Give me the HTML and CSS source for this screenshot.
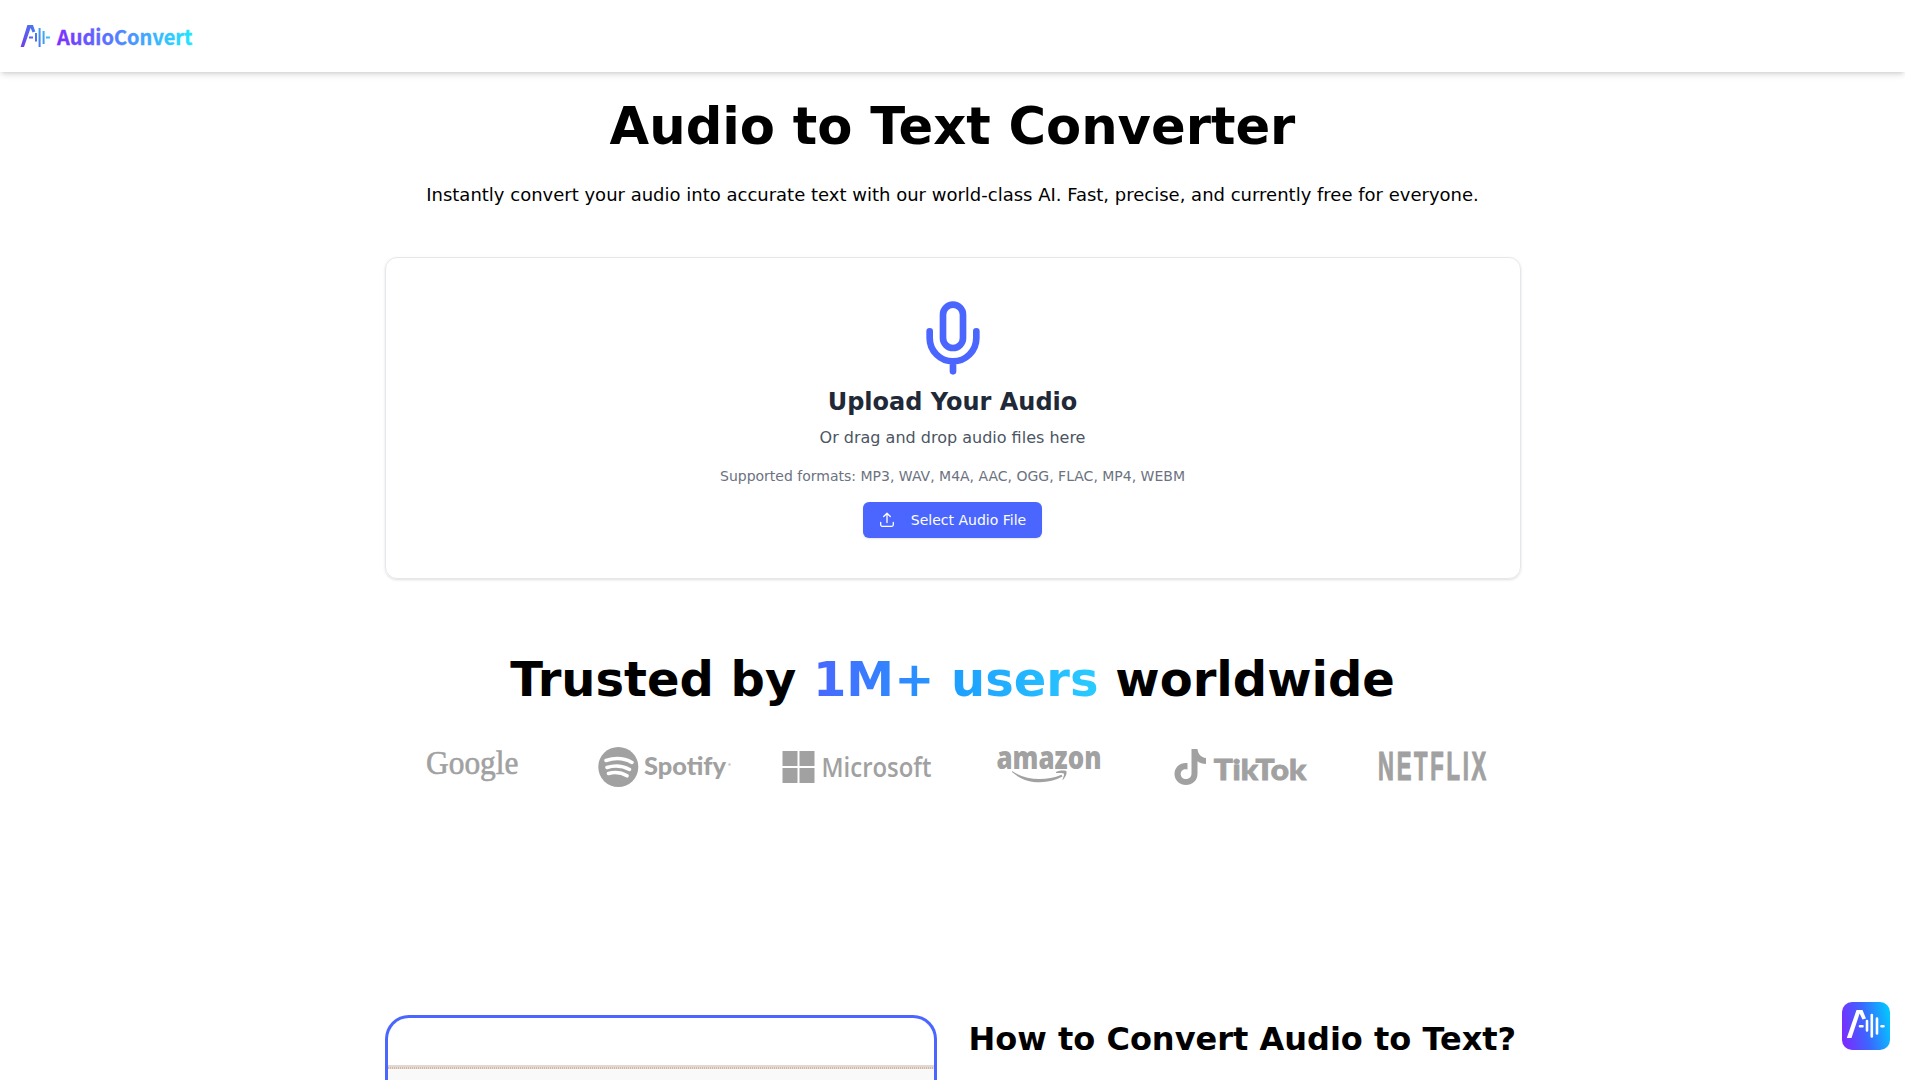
FILE: index.html
```html
<!DOCTYPE html>
<html lang="en">
<head>
<meta charset="utf-8">
<title>Audio to Text Converter</title>
<link rel="stylesheet" href="styles.css">
</head>
<body>
<header class="header">
  <svg class="brand" width="180" height="34" viewBox="0 0 180 34">
    <defs>
      <linearGradient id="brand-text" gradientUnits="userSpaceOnUse" x1="37" y1="0" x2="173" y2="0"><stop offset="0" stop-color="#7b2fff"/><stop offset=".5" stop-color="#4e8cff"/><stop offset="1" stop-color="#1fe8ff"/></linearGradient>
      <linearGradient id="brand-mark" gradientUnits="userSpaceOnUse" x1="0" y1="22" x2="30" y2="12"><stop offset="0" stop-color="#7040e8"/><stop offset=".5" stop-color="#4a72f5"/><stop offset="1" stop-color="#2fd8f5"/></linearGradient>
    </defs>
    <path d="M.6 28 7.400 6H13L15.300 12.500 12.600 13.500 10.600 9 4 28Z" fill="url(#brand-mark)"/>
    <g fill="none" stroke="url(#brand-mark)">
      <path d="M9 18.500H13M26 18.510H30" stroke-width="1.800"/>
      <path d="M16 14 16.010 22.500M19.600 9 19.610 28M23.600 12 23.610 25" stroke-width="2"/>
    </g>
    <text class="brand-name" x="37" y="25.700" textLength="135.500" lengthAdjust="spacingAndGlyphs" fill="url(#brand-text)">AudioConvert</text>
  </svg>
</header>
<main class="main">
  <h1 class="title">Audio to Text Converter</h1>
  <p class="subtitle">Instantly convert your audio into accurate text with our world-class AI. Fast, precise, and currently free for everyone.</p>
  <section class="upload">
    <svg class="mic" width="80" height="80" viewBox="0 0 24 24" fill="none" stroke="currentColor" stroke-width="2" stroke-linecap="round" stroke-linejoin="round"><path d="M12 19v3M19 10v2a7 7 0 0 1-14 0v-2"/><rect x="9" y="2" width="6" height="13" rx="3"/></svg>
    <h2 class="upload-title">Upload Your Audio</h2>
    <p class="upload-hint">Or drag and drop audio files here</p>
    <p class="upload-formats">Supported formats: MP3, WAV, M4A, AAC, OGG, FLAC, MP4, WEBM</p>
    <button class="button" type="button">
      <svg width="16" height="16" viewBox="0 0 16 16" fill="none" stroke="currentColor" stroke-width="1.300" stroke-linecap="round" stroke-linejoin="round"><path d="M1.700 10.500V12.800A1.500 1.500 0 0 0 3.200 14.300H12.800A1.500 1.500 0 0 0 14.300 12.800V10.500M8 10.500V1.500M4.700 4.500 8 1.300 11.300 4.500"/></svg>
      <span>Select Audio File</span>
    </button>
  </section>
  <section class="trusted">
    <h2 class="trusted-title">Trusted by <span class="accent">1M+ users</span> worldwide</h2>
    <div class="logos">
      <svg viewBox="0 0 176 40"><text class="google" x="41" y="26.800" textLength="92.500" lengthAdjust="spacingAndGlyphs">Google</text></svg>
      <svg viewBox="0 0 176 40"><circle cx="41.300" cy="20" r="20"/><path d="M29 13.500C38 10.500 48 11.500 55 15.500M30 20.500C38 18 46 19 52.500 22.500M31.500 26.500C38 24.800 44.500 25.600 50 28.800" class="cut"/><text class="spotify" x="67" y="28.300" textLength="82" lengthAdjust="spacingAndGlyphs">Spotify</text><circle cx="152.500" cy="17.500" r="1.200" opacity=".6"/></svg>
      <svg viewBox="0 0 176 40"><path d="M13.500 4H28.500V19H13.500ZM30.500 4H45.500V19H30.500ZM13.500 21H28.500V36H13.500ZM30.500 21H45.500V36H30.500Z"/><text class="microsoft" x="52.500" y="29.500" textLength="110" lengthAdjust="spacingAndGlyphs">Microsoft</text></svg>
      <svg viewBox="0 0 176 40"><text class="amazon" x="35.500" y="21.800" textLength="105" lengthAdjust="spacingAndGlyphs">amazon</text><path d="M51 24C65 33.500 84 34.500 100.500 27.800L101.500 29.600C86 38 65 37.500 51 25ZM95 25C99 23.400 105 23 105.500 24.600C106 27 104 31 101.500 33.200C101 33 103.500 28.500 103 26.700C101 25.800 98 26 95 26Z"/></svg>
      <svg viewBox="0 0 176 40"><path d="M38.500 2H44.500C45 7 48 10.500 53 11V17C49.700 17 47 16 44.500 14.300V26.500C44.500 34 39 38 33 38C27 38 21.500 33.500 21.500 27C21.500 20 27.500 15.300 34.500 16.200V22.500C31 21.500 27.700 23.500 27.700 27C27.700 30 30 32 33 32C36.500 32 38.500 29.500 38.500 26.500Z"/><text class="tiktok" x="60.700" y="33" textLength="92.500" lengthAdjust="spacingAndGlyphs">TikTok</text></svg>
      <svg viewBox="0 0 176 40"><text class="netflix" x="33" y="33" textLength="111" lengthAdjust="spacingAndGlyphs">NETFLIX</text></svg>
    </div>
  </section>
  <section class="howto">
    <div class="preview"><div class="preview-image"></div></div>
    <h2 class="howto-title">How to Convert Audio to Text?</h2>
  </section>
</main>
<div class="badge">
  <svg width="48" height="48" viewBox="0 0 48 48">
    <defs><linearGradient id="badge-bg" x1="0" y1=".6" x2="1" y2=".4"><stop offset="0" stop-color="#7a2cff"/><stop offset=".5" stop-color="#3a68ff"/><stop offset="1" stop-color="#05c3ff"/></linearGradient></defs>
    <rect width="48" height="48" rx="10" fill="url(#badge-bg)"/>
    <path d="M4.800 36 14.500 8H20.500L24 16.500 20.500 17.500 17.600 11.500 9.500 36Z" fill="#fff"/>
    <path d="M18 24.300H20.500M39.500 24.300H41.500M25 19V28.500M29.800 13V34.500M35 16.500V31.500" fill="none" stroke="#fff" stroke-width="2.600" stroke-linecap="round"/>
  </svg>
</div>
</body>
</html>
```
FILE: styles.css
```css
* { box-sizing: border-box; }
html { overflow: hidden; }
body { margin: 0; width: 1905px; height: 1080px; overflow: hidden; background: #fff; color: #000; font-family: "DejaVu Sans", sans-serif; }
h1, h2, p { margin: 0; }
.header { height: 72px; padding: 19px 20px; box-shadow: 0 4px 6px -1px rgba(0, 0, 0, .12), 0 2px 4px -2px rgba(0, 0, 0, .12); }
.brand { display: block; }
.brand-name { font: 700 20.5px "Noto Sans CJK SC", sans-serif; stroke: url(#brand-text); stroke-width: .3px; }
.main { width: 1136px; margin: 0 auto; display: flex; flex-direction: column; text-align: center; }
.title { margin-top: 24px; font-size: 51.2px; line-height: 60px; white-space: nowrap; }
.subtitle { margin-top: 25px; font-size: 18px; line-height: 28px; white-space: nowrap; }
.upload { margin-top: 48px; height: 322px; padding-top: 40px; display: flex; flex-direction: column; align-items: center; border: 1px solid #e5e7eb; border-radius: 12px; box-shadow: 0 1px 3px rgba(0, 0, 0, .1), 0 1px 2px -1px rgba(0, 0, 0, .1); }
.mic { color: #4a66ff; }
.upload-title { margin-top: 8px; font-size: 24px; line-height: 32px; color: #1f2937; }
.upload-hint { margin-top: 8px; font-size: 16px; line-height: 24px; color: #4b5563; }
.upload-formats { margin-top: 16px; font-size: 14px; line-height: 20px; color: #6b7280; }
.button { margin-top: 16px; height: 36px; padding: 0 16px; display: flex; align-items: center; gap: 16px; border: 0; border-radius: 6px; background: #4a66ff; color: #fff; font: 14px "DejaVu Sans", sans-serif; box-shadow: 0 1px 2px rgba(0, 0, 0, .1); }
.trusted { margin-top: 68px; }
.trusted-title { font-size: 48px; line-height: 64px; white-space: nowrap; }
.accent { background: linear-gradient(90deg, #4a66ff, #1e9fff 50%, #2accff); background-clip: text; color: transparent; }
.logos { margin-top: 36px; display: grid; grid-template-columns: repeat(6, 1fr); gap: 16px; }
.logos svg { width: 176px; height: 40px; fill: #a1a1a1; display: block; overflow: visible; }
.logos .cut { fill: none; stroke: #fff; stroke-width: 3.5; stroke-linecap: round; }
.logos text { stroke: #a1a1a1; stroke-width: 0; }
.logos .google { font: 34.5px "Liberation Serif", serif; stroke-width: .6px; }
.logos .spotify { font: 900 25px Lato, sans-serif; }
.logos .microsoft { font: 600 26.5px "Open Sans", sans-serif; }
.logos .amazon { font: 800 31px "Open Sans", sans-serif; }
.logos .tiktok { font: 900 29px Lato, sans-serif; stroke-width: .9px; }
.logos .netflix { font: 700 40px "Liberation Sans", sans-serif; letter-spacing: 5px; stroke-width: 1.2px; }
.howto { margin-top: 228px; display: grid; grid-template-columns: 1fr 1fr; gap: 32px; }
.preview { height: 65px; padding-top: 47px; border: 3px solid #4a66ff; border-bottom: 0; border-radius: 24px 24px 0 0; overflow: hidden; }
.preview-image { height: 15px; background: repeating-linear-gradient(90deg, #d2b8a4 0 1px, #eadccf 1px 2px) 0 2px / 100% 2px no-repeat, linear-gradient(#dfd9d6, #dfd9d6) 0 0 / 100% 2px no-repeat, #f9f9fa; }
.howto-title { margin-top: 2px; font-size: 32px; line-height: 44px; text-align: left; white-space: nowrap; }
.badge { position: fixed; left: 1842px; top: 1002px; width: 48px; height: 48px; }
```
